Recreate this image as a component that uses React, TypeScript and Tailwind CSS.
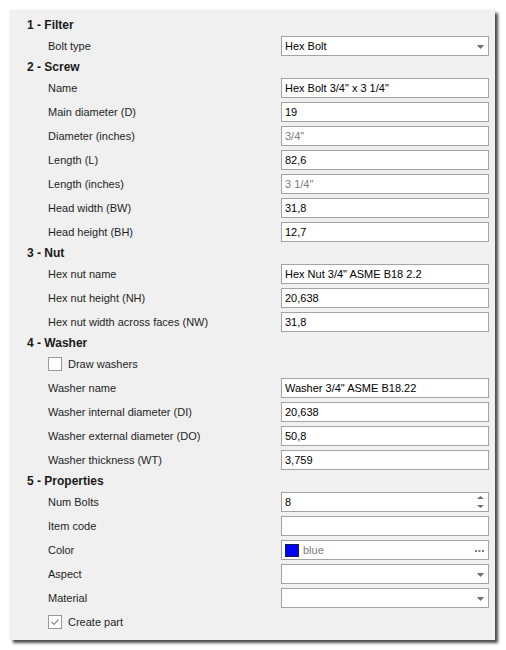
import React from 'react';

type Row =
  | { kind: 'header'; text: string }
  | { kind: 'text'; label: string; value?: string; muted?: boolean }
  | { kind: 'combo'; label: string; value?: string }
  | { kind: 'spin'; label: string; value: string }
  | { kind: 'color'; label: string; value: string }
  | { kind: 'check'; label: string; checked: boolean };

const rows: Row[] = [
  { kind: 'header', text: '1 - Filter' },
  { kind: 'combo', label: 'Bolt type', value: 'Hex Bolt' },
  { kind: 'header', text: '2 - Screw' },
  { kind: 'text', label: 'Name', value: 'Hex Bolt 3/4" x 3 1/4"' },
  { kind: 'text', label: 'Main diameter (D)', value: '19' },
  { kind: 'text', label: 'Diameter (inches)', value: '3/4"', muted: true },
  { kind: 'text', label: 'Length (L)', value: '82,6' },
  { kind: 'text', label: 'Length (inches)', value: '3 1/4"', muted: true },
  { kind: 'text', label: 'Head width (BW)', value: '31,8' },
  { kind: 'text', label: 'Head height (BH)', value: '12,7' },
  { kind: 'header', text: '3 - Nut' },
  { kind: 'text', label: 'Hex nut name', value: 'Hex Nut 3/4" ASME B18 2.2' },
  { kind: 'text', label: 'Hex nut height (NH)', value: '20,638' },
  { kind: 'text', label: 'Hex nut width across faces (NW)', value: '31,8' },
  { kind: 'header', text: '4 - Washer' },
  { kind: 'check', label: 'Draw washers', checked: false },
  { kind: 'text', label: 'Washer name', value: 'Washer 3/4" ASME B18.22' },
  { kind: 'text', label: 'Washer internal diameter (DI)', value: '20,638' },
  { kind: 'text', label: 'Washer external diameter (DO)', value: '50,8' },
  { kind: 'text', label: 'Washer thickness (WT)', value: '3,759' },
  { kind: 'header', text: '5 - Properties' },
  { kind: 'spin', label: 'Num Bolts', value: '8' },
  { kind: 'text', label: 'Item code' },
  { kind: 'color', label: 'Color', value: 'blue' },
  { kind: 'combo', label: 'Aspect' },
  { kind: 'combo', label: 'Material' },
  { kind: 'check', label: 'Create part', checked: true },
];

const DownArrow = () => (
  <svg width="7" height="4" viewBox="0 0 7 4" className="absolute right-[4px] top-[8px]">
    <polygon points="0,0 7,0 3.5,4" fill="#6e6e6e" />
  </svg>
);

const Box: React.FC<{ children?: React.ReactNode }> = ({ children }) => (
  <div className="relative w-[208px] h-[20px] bg-white border border-[#a3a3a3] flex items-center pl-[3px] text-black">
    {children}
  </div>
);

const Field: React.FC<{ row: Row }> = ({ row }) => {
  if (row.kind === 'text') {
    return (
      <Box>
        <span className={row.muted ? 'text-[#7c7c7c]' : ''}>{row.value}</span>
      </Box>
    );
  }
  if (row.kind === 'combo') {
    return (
      <Box>
        <span>{row.value}</span>
        <DownArrow />
      </Box>
    );
  }
  if (row.kind === 'spin') {
    return (
      <Box>
        <span>{row.value}</span>
        <svg width="7" height="14" viewBox="0 0 7 14" className="absolute right-[4px] top-[2px]">
          <polygon points="3.5,1 7,4 0,4" fill="#6e6e6e" />
          <polygon points="0,10 7,10 3.5,13" fill="#6e6e6e" />
        </svg>
      </Box>
    );
  }
  if (row.kind === 'color') {
    return (
      <Box>
        <span className="w-[14px] h-[13px] bg-[#0000ff] border border-[#1a1a4a] mr-[4px]" />
        <span className="text-[#7c7c7c]">{row.value}</span>
        <svg width="9" height="2" viewBox="0 0 9 2" className="absolute right-[4px] top-[9px]">
          <rect x="0" y="0" width="2" height="2" fill="#7a7a7a" />
          <rect x="3.5" y="0" width="2" height="2" fill="#7a7a7a" />
          <rect x="7" y="0" width="2" height="2" fill="#7a7a7a" />
        </svg>
      </Box>
    );
  }
  return null;
};

export default function App() {
  return (
    <div
      className="w-[506px] h-[650px] bg-white pt-[10px] pl-[10px] text-[11px] text-[#1e1e1e]"
      style={{ fontFamily: '"Liberation Sans", Arial, sans-serif' }}
    >
      <div className="w-[485px] h-[630px] bg-[#f0f0f0] rounded-tl-[3px] pt-[6px] shadow-[0_0_2px_rgba(0,0,0,0.12),3px_3px_3px_rgba(0,0,0,0.7)]">
        {rows.map((row, i) => {
          if (row.kind === 'header') {
            return (
              <div key={i} className="h-[18px] flex items-center pl-[17px] font-bold text-[12px] text-[#1a1a1a]">
                {row.text}
              </div>
            );
          }
          if (row.kind === 'check') {
            return (
              <div key={i} className="h-6 flex items-center pl-[38px]">
                <span className="w-[14px] h-[14px] bg-white border border-[#9a9a9a] flex items-center justify-center mr-[6px]">
                  {row.checked && (
                    <svg width="10" height="8" viewBox="0 0 10 8">
                      <polyline points="1.5,4 4,6.5 8.5,1.5" fill="none" stroke="#8a8a8a" strokeWidth="1.2" />
                    </svg>
                  )}
                </span>
                <span>{row.label}</span>
              </div>
            );
          }
          return (
            <div key={i} className="h-6 flex items-center">
              <div className="w-[271px] pl-[38px]">{row.label}</div>
              <Field row={row} />
            </div>
          );
        })}
      </div>
    </div>
  );
}
